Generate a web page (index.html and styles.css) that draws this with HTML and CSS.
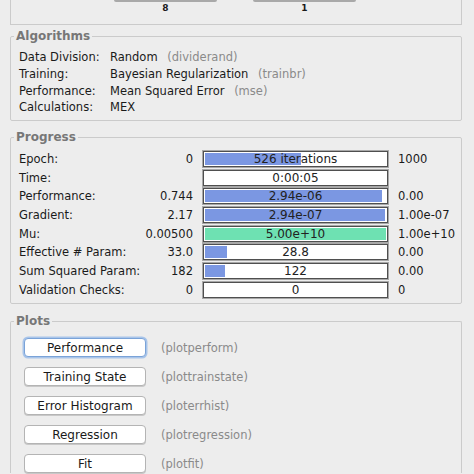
FILE: index.html
```html
<!DOCTYPE html>
<html>
<head>
<meta charset="utf-8">
<link rel="stylesheet" href="styles.css">
</head>
<body>
<div class="page">
  <div class="toppanel">
    <div class="topcol"><div class="topbar"></div><div class="toplabel">8</div></div>
    <div class="topcol"><div class="topbar"></div><div class="toplabel">1</div></div>
  </div>

  <fieldset class="group algo">
    <legend>Algorithms</legend>
    <div class="algogrid">
      <div>Data Division:</div><div>Random <span class="hint">(dividerand)</span></div>
      <div>Training:</div><div>Bayesian Regularization <span class="hint">(trainbr)</span></div>
      <div>Performance:</div><div>Mean Squared Error <span class="hint">(mse)</span></div>
      <div>Calculations:</div><div>MEX</div>
    </div>
  </fieldset>

  <fieldset class="group progress">
    <legend>Progress</legend>
    <div class="proggrid">
      <div>Epoch:</div><div class="num">0</div>
      <div class="bar"><div class="fill blue" style="width:52.6%"></div><span>526 iterations</span></div><div>1000</div>

      <div>Time:</div><div class="num"></div>
      <div class="bar"><span>0:00:05</span></div><div></div>

      <div>Performance:</div><div class="num">0.744</div>
      <div class="bar"><div class="fill blue" style="width:96.5%"></div><span>2.94e-06</span></div><div>0.00</div>

      <div>Gradient:</div><div class="num">2.17</div>
      <div class="bar"><div class="fill blue" style="width:98.5%"></div><span>2.94e-07</span></div><div>1.00e-07</div>

      <div>Mu:</div><div class="num">0.00500</div>
      <div class="bar"><div class="fill green" style="width:100%"></div><span>5.00e+10</span></div><div>1.00e+10</div>

      <div>Effective # Param:</div><div class="num">33.0</div>
      <div class="bar"><div class="fill blue" style="width:12%"></div><span>28.8</span></div><div>0.00</div>

      <div>Sum Squared Param:</div><div class="num">182</div>
      <div class="bar"><div class="fill blue" style="width:11%"></div><span>122</span></div><div>0.00</div>

      <div>Validation Checks:</div><div class="num">0</div>
      <div class="bar"><span>0</span></div><div>0</div>
    </div>
  </fieldset>

  <fieldset class="group plots">
    <legend>Plots</legend>
    <div class="plotgrid">
      <button class="btn focus">Performance</button><span class="hint">(plotperform)</span>
      <button class="btn">Training State</button><span class="hint">(plottrainstate)</span>
      <button class="btn">Error Histogram</button><span class="hint">(ploterrhist)</span>
      <button class="btn">Regression</button><span class="hint">(plotregression)</span>
      <button class="btn">Fit</button><span class="hint">(plotfit)</span>
    </div>
  </fieldset>
</div>
</body>
</html>
```
FILE: styles.css
```css
html, body {
  margin: 0;
  padding: 0;
  background: #ededed;
  width: 474px;
  height: 474px;
  overflow: hidden;
}
body {
  font-family: "DejaVu Sans", "Liberation Sans", sans-serif;
  font-size: 11.5px;
  color: #1a1a1a;
}
.page {
  display: flex;
  flex-direction: column;
}
.toppanel {
  margin: 0 12px 0 10px;
  height: 24px;
  border: 1px solid #cbcbcb;
  border-top: none;
  display: flex;
  gap: 36px;
  padding-left: 103px;
}
.topcol {
  width: 103px;
  display: flex;
  flex-direction: column;
  align-items: center;
}
.topbar {
  width: 103px;
  height: 2px;
  background: #a9a9a9;
  border-radius: 0 0 2px 2px;
}
.toplabel {
  font-size: 9px;
  font-weight: bold;
  margin-top: 1px;
  line-height: 10px;
}
.group {
  margin: 0 12px 0 10px;
  border: 1px solid #cbcbcb;
  border-radius: 2px;
  padding: 0;
  min-width: 0;
}
.group legend {
  font-weight: bold;
  font-size: 12px;
  color: #777;
  padding: 0 2px;
  margin-left: 3px;
  line-height: 14px;
}
.algo {
  margin-top: 4px;
  height: 92px;
  box-sizing: border-box;
}
.algogrid {
  display: grid;
  grid-template-columns: 91px auto;
  grid-auto-rows: 16.7px;
  align-items: center;
  padding: 6px 0 0 8px;
}
.hint {
  color: #8a8a8a;
  margin-left: 6px;
}
.progress {
  margin-top: 9px;
  height: 174px;
  box-sizing: border-box;
}
.proggrid {
  display: grid;
  grid-template-columns: 126px 48px 185px auto;
  column-gap: 0;
  grid-auto-rows: 16px;
  row-gap: 2.7px;
  align-items: center;
  padding: 7px 0 0 8px;
}
.proggrid .num {
  text-align: right;
}
.proggrid > div:nth-child(4n+3) {
  margin-left: 10px;
}
.proggrid > div:nth-child(4n) {
  margin-left: 20px;
}
.bar {
  position: relative;
  height: 16px;
  box-sizing: border-box;
  width: 185px;
  border: 1px solid #4f4f4f;
  box-shadow: 0 0 0 1px #a8a8a8;
  background: #fff;
  display: flex;
  align-items: center;
  justify-content: center;
}
.fill {
  position: absolute;
  left: 1px;
  top: 1px;
  bottom: 1px;
  max-width: calc(100% - 2px);
}
.fill.blue { background: #7b97e2; }
.fill.green { background: #6ee1b2; }
.bar span {
  position: relative;
  font-size: 12px;
  color: #222;
  line-height: 14px;
}
.plots {
  margin-top: 10px;
  height: 159px;
  box-sizing: border-box;
  border-bottom: none;
  border-radius: 2px 2px 0 0;
}
.plotgrid {
  display: grid;
  grid-template-columns: 122px auto;
  column-gap: 15px;
  grid-auto-rows: 19px;
  row-gap: 10px;
  align-items: center;
  padding: 10px 0 0 13px;
}
.plotgrid .hint {
  margin-left: 0;
}
.btn {
  height: 19px;
  width: 122px;
  box-sizing: border-box;
  background: #fff;
  border: 1px solid #b4b4b4;
  border-radius: 4px;
  font-family: "DejaVu Sans", "Liberation Sans", sans-serif;
  font-size: 12px;
  color: #1a1a1a;
  padding: 0;
  box-shadow: 0 1px 0 #c8c8c8;
}
.btn.focus {
  border: 1px solid #7aa3d8;
  box-shadow: 0 0 0 1.5px #a9c5ea;
}
```
